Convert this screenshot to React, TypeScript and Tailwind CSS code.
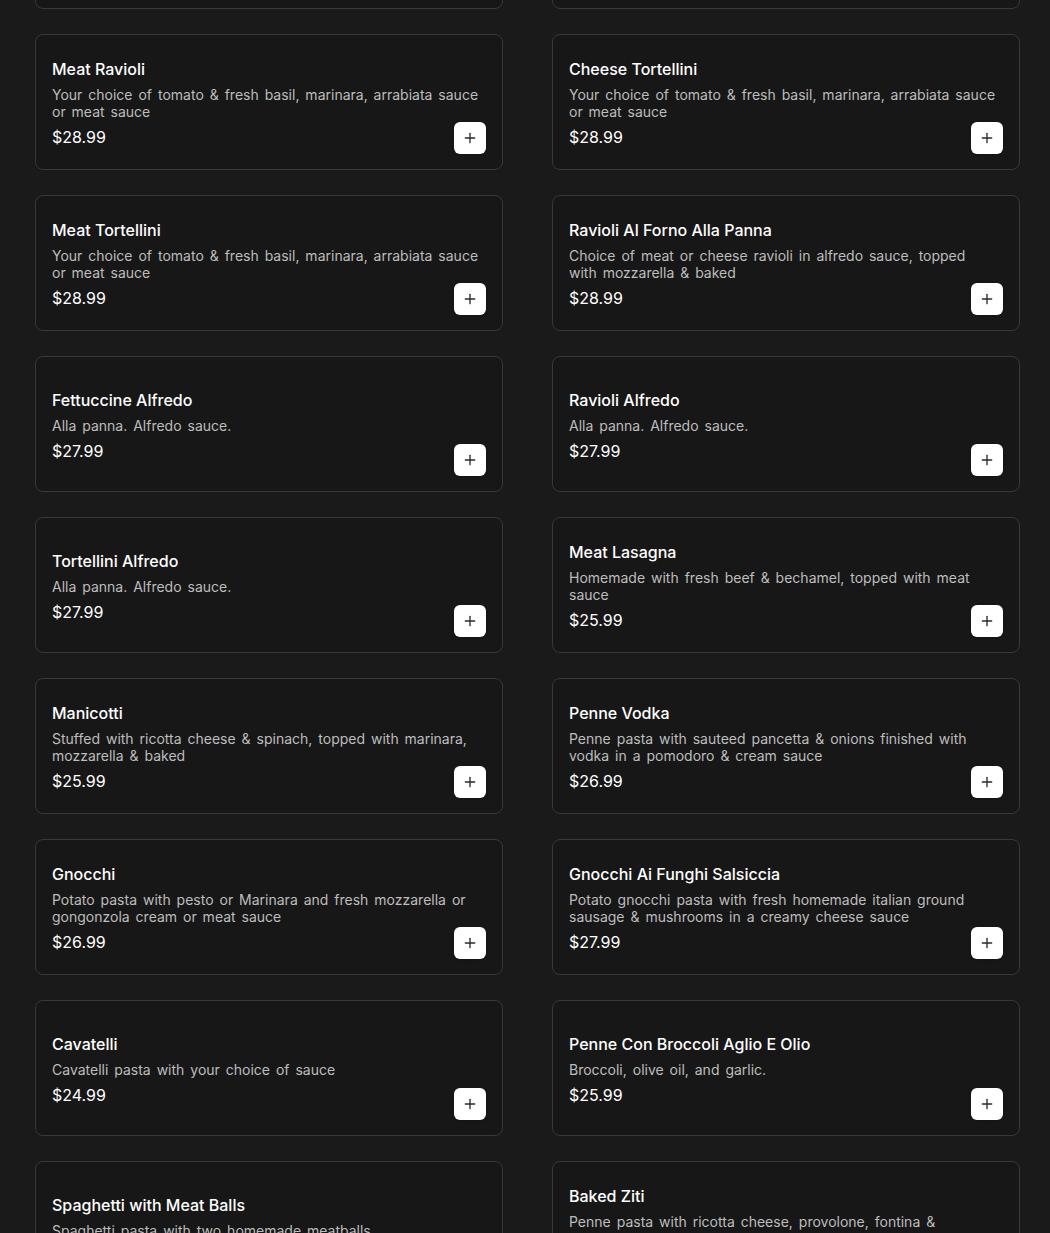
import { Plus } from 'lucide-react'

type Item = { name: string; desc: string; price: string }

const items: Item[] = [
  { name: 'Cheese Ravioli', desc: 'Your choice of tomato & fresh basil, marinara, arrabiata sauce or meat sauce', price: '$27.99' },
  { name: 'Spaghetti Bolognese', desc: 'Spaghetti pasta with homemade meat sauce', price: '$24.99' },
  { name: 'Meat Ravioli', desc: 'Your choice of tomato & fresh basil, marinara, arrabiata sauce or meat sauce', price: '$28.99' },
  { name: 'Cheese Tortellini', desc: 'Your choice of tomato & fresh basil, marinara, arrabiata sauce or meat sauce', price: '$28.99' },
  { name: 'Meat Tortellini', desc: 'Your choice of tomato & fresh basil, marinara, arrabiata sauce or meat sauce', price: '$28.99' },
  { name: 'Ravioli Al Forno Alla Panna', desc: 'Choice of meat or cheese ravioli in alfredo sauce, topped with mozzarella & baked', price: '$28.99' },
  { name: 'Fettuccine Alfredo', desc: 'Alla panna. Alfredo sauce.', price: '$27.99' },
  { name: 'Ravioli Alfredo', desc: 'Alla panna. Alfredo sauce.', price: '$27.99' },
  { name: 'Tortellini Alfredo', desc: 'Alla panna. Alfredo sauce.', price: '$27.99' },
  { name: 'Meat Lasagna', desc: 'Homemade with fresh beef & bechamel, topped with meat sauce', price: '$25.99' },
  { name: 'Manicotti', desc: 'Stuffed with ricotta cheese & spinach, topped with marinara, mozzarella & baked', price: '$25.99' },
  { name: 'Penne Vodka', desc: 'Penne pasta with sauteed pancetta & onions finished with vodka in a pomodoro & cream sauce', price: '$26.99' },
  { name: 'Gnocchi', desc: 'Potato pasta with pesto or Marinara and fresh mozzarella or gongonzola cream or meat sauce', price: '$26.99' },
  { name: 'Gnocchi Ai Funghi Salsiccia', desc: 'Potato gnocchi pasta with fresh homemade italian ground sausage & mushrooms in a creamy cheese sauce', price: '$27.99' },
  { name: 'Cavatelli', desc: 'Cavatelli pasta with your choice of sauce', price: '$24.99' },
  { name: 'Penne Con Broccoli Aglio E Olio', desc: 'Broccoli, olive oil, and garlic.', price: '$25.99' },
  { name: 'Spaghetti with Meat Balls', desc: 'Spaghetti pasta with two homemade meatballs', price: '$25.99' },
  { name: 'Baked Ziti', desc: 'Penne pasta with ricotta cheese, provolone, fontina & mozzarella', price: '$25.99' },
]

function MenuCard({ item }: { item: Item }) {
  return (
    <div className="grid h-[136px] rounded-lg border border-[#383838] bg-[#171717] px-4">
      {/* text and add button share the one grid cell */}
      <div className="col-start-1 row-start-1 flex flex-col self-center pt-[2px]">
        <h3 className="text-[16px] leading-6 font-medium text-white">{item.name}</h3>
        <p className="mt-[5px] max-w-[428px] text-[14px] leading-[17px] [word-spacing:2px] text-[#bdbdbd]">{item.desc}</p>
        <div className="mt-[5px] text-[16px] leading-6 text-white">{item.price}</div>
      </div>
      <button className="col-start-1 row-start-1 mb-[15px] flex h-8 w-8 items-center justify-center self-end justify-self-end rounded-md bg-white shadow">
        <Plus size={16} strokeWidth={2} color="#2a2a2a" />
      </button>
    </div>
  )
}

export default function App() {
  return (
    <div className="min-h-screen overflow-hidden bg-[#1a1a1a] font-['Inter',sans-serif]">
      <div className="-mt-[127px] grid grid-cols-2 gap-x-[49px] gap-y-[25px] pl-[35px] pr-[30px]">
        {items.map((item) => (
          <MenuCard key={item.name} item={item} />
        ))}
      </div>
    </div>
  )
}
